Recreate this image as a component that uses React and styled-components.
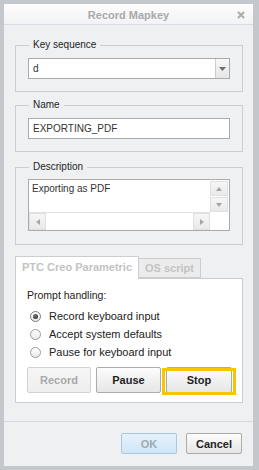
import React from "react";
import styled, { createGlobalStyle } from "styled-components";

const Global = createGlobalStyle`
  html, body { margin: 0; padding: 0; background: #ffffff; }
  body { font-family: "Liberation Sans", Arial, sans-serif; }
  * { box-sizing: border-box; }
`;

const Window = styled.div`
  width: 259px;
  height: 470px;
  display: flex;
  flex-direction: column;
  border: 4px solid #c4c8cc;
  border-right-width: 6px;
  background: #eef0f2;
`;

const TitleBar = styled.div`
  height: 21px;
  display: grid;
  grid-template-columns: 1fr auto 1fr;
  align-items: center;
  border-bottom: 1px solid #d5dce3;
  background: linear-gradient(#fdfdfd, #f2f3f5);
`;

const Title = styled.div`
  grid-column: 2;
  font-size: 11px;
  font-weight: bold;
  color: #a9a9a9;
  padding-top: 1px;
`;

const Close = styled.div`
  grid-column: 3;
  justify-self: end;
  display: flex;
  padding-right: 8px;
  padding-top: 1px;
`;

const Content = styled.div`
  padding: 20px 10px 0 11px;
  display: flex;
  flex-direction: column;
`;

const Group = styled.div`
  position: relative;
  border: 1px solid #cbcdd0;
  padding: ${(p) => p.$pad || "12px 12px 12px 12px"};
  margin-top: ${(p) => p.$mt || 0}px;
`;

const Legend = styled.span`
  position: absolute;
  top: -7px;
  left: 13px;
  padding: 0 4px;
  background: #eef0f2;
  font-size: 10px;
  line-height: 12px;
  color: #1e1e1e;
`;

const Input = styled.div`
  height: 21px;
  border: 1px solid #ababab;
  background: #ffffff;
  display: flex;
  align-items: center;
  padding-left: 4px;
  font-size: 10px;
  color: #333333;
`;

const SelectBox = styled(Input)`
  padding-left: 0;
`;

const SelectText = styled.div`
  flex: 1;
  padding-left: 4px;
`;

const DropBtn = styled.div`
  width: 14px;
  align-self: stretch;
  border-left: 1px solid #cdcdcd;
  background: linear-gradient(#f7f7f7, #e6e6e6);
  display: flex;
  align-items: center;
  justify-content: center;
`;

const TextArea = styled.div`
  height: 52px;
  border: 1px solid #ababab;
  background: #ffffff;
  display: grid;
  grid-template-columns: 1fr 18px;
  grid-template-rows: 1fr 18px;
  padding-right: 1px;
`;

const AreaText = styled.div`
  font-size: 10px;
  color: #333333;
  padding: 3px 0 0 3px;
`;

const VScroll = styled.div`
  display: flex;
  flex-direction: column;
  gap: 1px;
  padding-top: 1px;
`;

const HScroll = styled.div`
  display: flex;
  justify-content: space-between;
  border-top: 1px solid #e2e2e2;
`;

const ScrollBtn = styled.div`
  width: ${(p) => p.$w || 18}px;
  height: ${(p) => p.$h || 15}px;
  background: linear-gradient(#f6f6f6, #e9e9e9);
  border: 1px solid #e0e0e0;
  display: flex;
  align-items: center;
  justify-content: center;
`;

const Tabs = styled.div`
  margin-top: 11px;
  display: flex;
  flex-direction: column;
`;

const TabRow = styled.div`
  display: flex;
  align-items: flex-end;
`;

const Tab = styled.div`
  position: relative;
  z-index: ${(p) => (p.$active ? 1 : 0)};
  height: ${(p) => (p.$active ? 23 : 20)}px;
  margin-bottom: ${(p) => (p.$active ? -1 : 0)}px;
  padding: 0 6px;
  border: 1px solid #cbcdd0;
  border-bottom: ${(p) => (p.$active ? "none" : "1px solid #cbcdd0")};
  border-left: ${(p) => (p.$active ? "1px solid #cbcdd0" : "none")};
  background: ${(p) => (p.$active ? "#ffffff" : "#ececec")};
  font-size: 11px;
  font-weight: bold;
  color: #c3c3c3;
  display: flex;
  align-items: center;
  padding-bottom: ${(p) => (p.$active ? 2 : 0)}px;
`;

const Panel = styled.div`
  border: 1px solid #cbcdd0;
  background: #ffffff;
  padding: 10px 10px 9px 11px;
  display: flex;
  flex-direction: column;
`;

const Prompt = styled.div`
  font-size: 10.5px;
  line-height: 13px;
  color: #222222;
`;

const Radios = styled.div`
  margin-top: 5px;
  padding-left: 3px;
  display: flex;
  flex-direction: column;
`;

const RadioRow = styled.div`
  height: 18px;
  display: flex;
  align-items: center;
  gap: 8px;
  font-size: 11px;
  color: #222222;
`;

const RadioCircle = styled.span`
  width: 11px;
  height: 11px;
  border-radius: 50%;
  border: 1px solid ${(p) => (p.$on ? "#7b7b7b" : "#9c9c9c")};
  background: linear-gradient(#ffffff, #e9e9e9);
  display: flex;
  align-items: center;
  justify-content: center;
  flex: none;
  &::after {
    content: "";
    display: ${(p) => (p.$on ? "block" : "none")};
    width: 5px;
    height: 5px;
    border-radius: 50%;
    background: radial-gradient(circle at 40% 35%, #7a7a7a, #1d1d1d);
  }
`;

const ActionRow = styled.div`
  margin-top: 6px;
  display: flex;
  gap: 5px;
`;

const Button = styled.div`
  position: relative;
  width: ${(p) => p.$w || 65}px;
  height: ${(p) => p.$h || 26}px;
  border: 1px solid #ababab;
  border-radius: 2px;
  background: linear-gradient(#fcfcfc, #e6e6e6);
  font-size: 11px;
  font-weight: bold;
  color: #222222;
  display: flex;
  align-items: center;
  justify-content: center;
  ${(p) =>
    p.$disabled &&
    `
    border-color: #d2d2d2;
    background: linear-gradient(#f6f6f6, #eeeeee);
    color: #a8a8a8;
  `}
  ${(p) =>
    p.$primary &&
    `
    border-color: #a7c9e4;
    background: linear-gradient(#e6f2fb, #cfe5f6);
    color: #9ea8b1;
  `}
  ${(p) =>
    p.$highlight &&
    `
    &::after {
      content: "";
      position: absolute;
      top: 0px;
      bottom: -3px;
      left: -5px;
      right: -5px;
      border: 3px solid #f8c500;
    }
  `}
`;

const Footer = styled.div`
  margin-top: auto;
  border-top: 1px solid #d6d9dd;
  padding: 11px 11px 12px;
  display: flex;
  justify-content: flex-end;
  gap: 9px;
`;

const Tri = ({ dir = "down", color = "#a6a6a6", w = 6, h = 4 }) => {
  const pts = {
    down: `0,0 ${w},0 ${w / 2},${h}`,
    up: `0,${h} ${w},${h} ${w / 2},0`,
    left: `${h},0 ${h},${w} 0,${w / 2}`,
    right: `0,0 0,${w} ${h},${w / 2}`,
  }[dir];
  const vw = dir === "left" || dir === "right" ? h : w;
  const vh = dir === "left" || dir === "right" ? w : h;
  return (
    <svg width={vw} height={vh} viewBox={`0 0 ${vw} ${vh}`}>
      <polygon points={pts} fill={color} />
    </svg>
  );
};

export default function App() {
  return (
    <>
      <Global />
      <Window>
        <TitleBar>
          <Title>Record Mapkey</Title>
          <Close>
            <svg width="8" height="8" viewBox="0 0 8 8">
              <path d="M1 1 L7 7 M7 1 L1 7" stroke="#ababab" strokeWidth="2" />
            </svg>
          </Close>
        </TitleBar>
        <Content>
          <Group>
            <Legend>Key sequence</Legend>
            <SelectBox>
              <SelectText>d</SelectText>
              <DropBtn>
                <Tri dir="down" color="#6e6e6e" w={7} h={4} />
              </DropBtn>
            </SelectBox>
          </Group>
          <Group $mt={13}>
            <Legend>Name</Legend>
            <Input>EXPORTING_PDF</Input>
          </Group>
          <Group $mt={15} $pad="11px 12px 13px 12px">
            <Legend>Description</Legend>
            <TextArea>
              <AreaText>Exporting as PDF</AreaText>
              <VScroll>
                <ScrollBtn $w={18} $h={15}>
                  <Tri dir="up" />
                </ScrollBtn>
                <ScrollBtn $w={18} $h={15}>
                  <Tri dir="down" />
                </ScrollBtn>
              </VScroll>
              <HScroll>
                <ScrollBtn $w={17} $h={17}>
                  <Tri dir="left" />
                </ScrollBtn>
                <ScrollBtn $w={17} $h={17}>
                  <Tri dir="right" />
                </ScrollBtn>
              </HScroll>
              <div />
            </TextArea>
          </Group>
          <Tabs>
            <TabRow>
              <Tab $active>PTC Creo Parametric</Tab>
              <Tab>OS script</Tab>
            </TabRow>
            <Panel>
              <Prompt>Prompt handling:</Prompt>
              <Radios>
                <RadioRow>
                  <RadioCircle $on />
                  Record keyboard input
                </RadioRow>
                <RadioRow>
                  <RadioCircle />
                  Accept system defaults
                </RadioRow>
                <RadioRow>
                  <RadioCircle />
                  Pause for keyboard input
                </RadioRow>
              </Radios>
              <ActionRow>
                <Button $disabled $w={64}>Record</Button>
                <Button>Pause</Button>
                <Button $highlight $w={66}>Stop</Button>
              </ActionRow>
            </Panel>
          </Tabs>
        </Content>
        <Footer>
          <Button $primary $w={56} $h={21}>OK</Button>
          <Button $w={56} $h={21}>Cancel</Button>
        </Footer>
      </Window>
    </>
  );
}
